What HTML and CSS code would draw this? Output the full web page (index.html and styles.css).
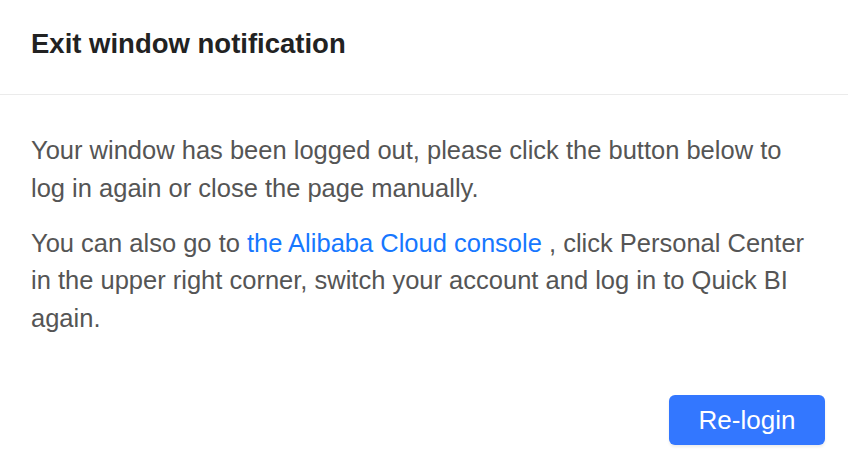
FILE: index.html
```html
<!DOCTYPE html>
<html>
<head>
<meta charset="utf-8">
<link rel="stylesheet" href="styles.css">
</head>
<body>
<div class="dialog">
  <div class="header"><h1 class="title">Exit window notification</h1></div>
  <div class="content">
    <p class="para">Your window has been logged out, please click the button below to log in again or close the page manually.</p>
    <p class="para">You can also go to <a class="link" href="#">the Alibaba Cloud console</a> , click Personal Center in the upper right corner, switch your account and log in to Quick BI again.</p>
  </div>
  <div class="footer"><button class="btn">Re-login</button></div>
</div>
</body>
</html>
```
FILE: styles.css
```css
html, body { margin: 0; padding: 0; background: #fff; }
body { font-family: "Liberation Sans", Arial, sans-serif; width: 848px; height: 468px; overflow: hidden; }
.dialog { display: flex; flex-direction: column; height: 468px; }
.header { height: 95px; box-sizing: border-box; border-bottom: 1px solid #ebebeb; padding: 29px 31px 0; }
.title { margin: 0; font-size: 27.5px; line-height: 30px; font-weight: 700; color: #222; }
.content { padding: 37px 38px 0 31px; }
.para { margin: 0 0 17.5px; font-size: 25.5px; line-height: 37.5px; color: #555; }
.link { color: #1677ff; text-decoration: none; }
.footer { margin-top: auto; display: flex; justify-content: flex-end; padding: 0 23px 23px; }
.btn { width: 156px; height: 50px; border: none; border-radius: 6px; background: #3377ff; color: #fff; font-family: "Liberation Sans", Arial, sans-serif; font-size: 26px; box-shadow: 0 2px 3px rgba(0,0,0,0.08); }
```
